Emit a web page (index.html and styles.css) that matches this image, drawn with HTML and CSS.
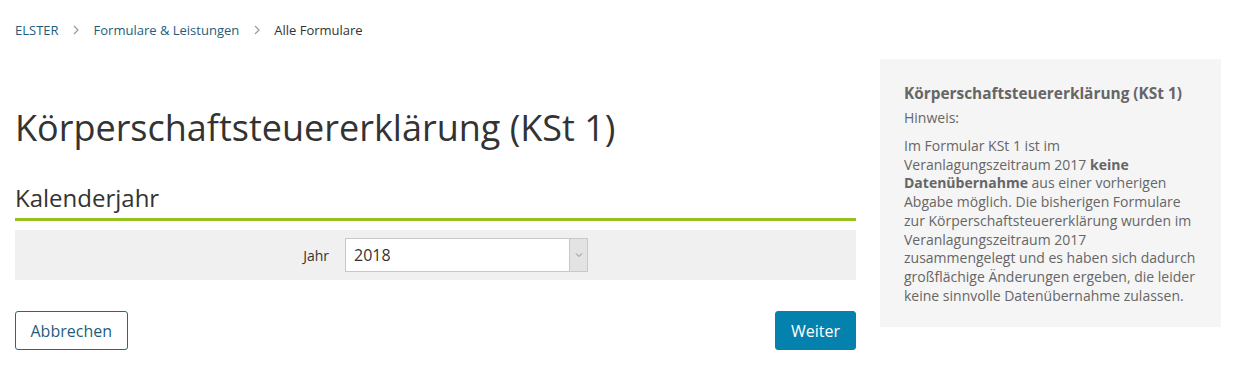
FILE: index.html
```html
<!DOCTYPE html>
<html lang="de">
<head>
<meta charset="utf-8">
<title>Körperschaftsteuererklärung (KSt 1)</title>
<link rel="stylesheet" href="styles.css">
</head>
<body>
<div class="page">
  <nav class="crumbs">
    <a href="#">ELSTER</a>
    <span class="sep"><svg width="8" height="10" viewBox="0 0 8 10"><path d="M2 1l4 4-4 4" fill="none" stroke="#9a9a9a" stroke-width="1.2"/></svg></span>
    <a href="#">Formulare &amp; Leistungen</a>
    <span class="sep"><svg width="8" height="10" viewBox="0 0 8 10"><path d="M2 1l4 4-4 4" fill="none" stroke="#9a9a9a" stroke-width="1.2"/></svg></span>
    <span class="current">Alle Formulare</span>
  </nav>
  <div class="layout">
    <main class="main">
      <h1 class="title">Körperschaftsteuererklärung (KSt 1)</h1>
      <h2 class="section">Kalenderjahr</h2>
      <div class="band">
        <label class="label">Jahr</label>
        <div class="select">
          <span class="value">2018</span>
          <span class="arrow"><svg width="8" height="6" viewBox="0 0 8 6"><path d="M1 1.5l3 3 3-3" fill="none" stroke="#888" stroke-width="1"/></svg></span>
        </div>
      </div>
      <div class="actions">
        <button class="btn btn-outline">Abbrechen</button>
        <button class="btn btn-primary">Weiter</button>
      </div>
    </main>
    <aside class="side">
      <h3 class="side-title">Körperschaftsteuererklärung (KSt 1)</h3>
      <p class="side-sub">Hinweis:</p>
      <p class="side-text">Im Formular KSt 1 ist im Veranlagungszeitraum 2017 <b>keine Datenübernahme</b> aus einer vorherigen Abgabe möglich. Die bisherigen Formulare zur Körperschaftsteuererklärung wurden im Veranlagungszeitraum 2017 zusammengelegt und es haben sich dadurch großflächige Änderungen ergeben, die leider keine sinnvolle Datenübernahme zulassen.</p>
    </aside>
  </div>
</div>
</body>
</html>
```
FILE: styles.css
```css
* { box-sizing: border-box; }
body {
  margin: 0;
  font-family: "Open Sans", "Noto Sans", sans-serif;
  color: #333;
  background: #fff;
}
.page { padding: 20px 16px 0 15px; }
.crumbs {
  display: flex;
  align-items: center;
  font-size: 13px;
  line-height: 20px;
  gap: 13.5px;
}
.crumbs a { color: #1f5d7d; text-decoration: none; }
.crumbs .current { color: #333; }
.sep { display: flex; align-items: center; }
.layout {
  display: flex;
  gap: 24px;
  margin-top: 19px;
  align-items: flex-start;
}
.main { width: 841px; flex: none; }
.title {
  margin: 46px 0 0;
  font-size: 36px;
  font-weight: 400;
  line-height: 46px;
  color: #333;
}
.section {
  margin: 31px 0 0;
  font-size: 24px;
  font-weight: 400;
  line-height: 32px;
  color: #333;
  padding-bottom: 4px;
  border-bottom: 3px solid #95c11f;
}
.band {
  margin-top: 9px;
  background: #f0f0f0;
  height: 50px;
  display: flex;
  align-items: center;
  padding-left: 287px;
  gap: 16px;
}
.label { font-size: 14px; color: #333; width: 27px; text-align: right; }
.select {
  width: 243px;
  height: 34px;
  background: #fff;
  border: 1px solid #c8c8c8;
  display: flex;
  align-items: center;
  justify-content: space-between;
}
.value { font-size: 16px; padding-left: 8px; color: #333; }
.arrow {
  width: 18px;
  height: 100%;
  background: #e3e3e3;
  border-left: 1px solid #c8c8c8;
  display: flex;
  align-items: center;
  justify-content: center;
}
.actions {
  display: flex;
  justify-content: space-between;
  margin-top: 31px;
}
.btn {
  font-family: inherit;
  font-size: 16px;
  height: 39px;
  border-radius: 3px;
  padding: 0 15px;
  cursor: pointer;
}
.btn-outline { background: #fff; color: #1f5d7d; border: 1px solid #1f6a8a; padding: 0 14.5px; }
.btn-primary { background: #0581ae; color: #fff; border: 1px solid #0581ae; }
.side {
  width: 341px;
  flex: none;
  background: #f5f5f5;
  padding: 24px 24px 22px 24px;
  color: #666;
}
.side-title {
  margin: 0;
  font-size: 15.4px;
  font-weight: 700;
  line-height: 22px;
  color: #666;
}
.side-sub { margin: 3px 0 0; font-size: 14px; line-height: 20px; }
.side-text { margin: 9px 0 0; font-size: 14px; line-height: 18.7px; }
.side-text b { font-weight: 700; }
```
